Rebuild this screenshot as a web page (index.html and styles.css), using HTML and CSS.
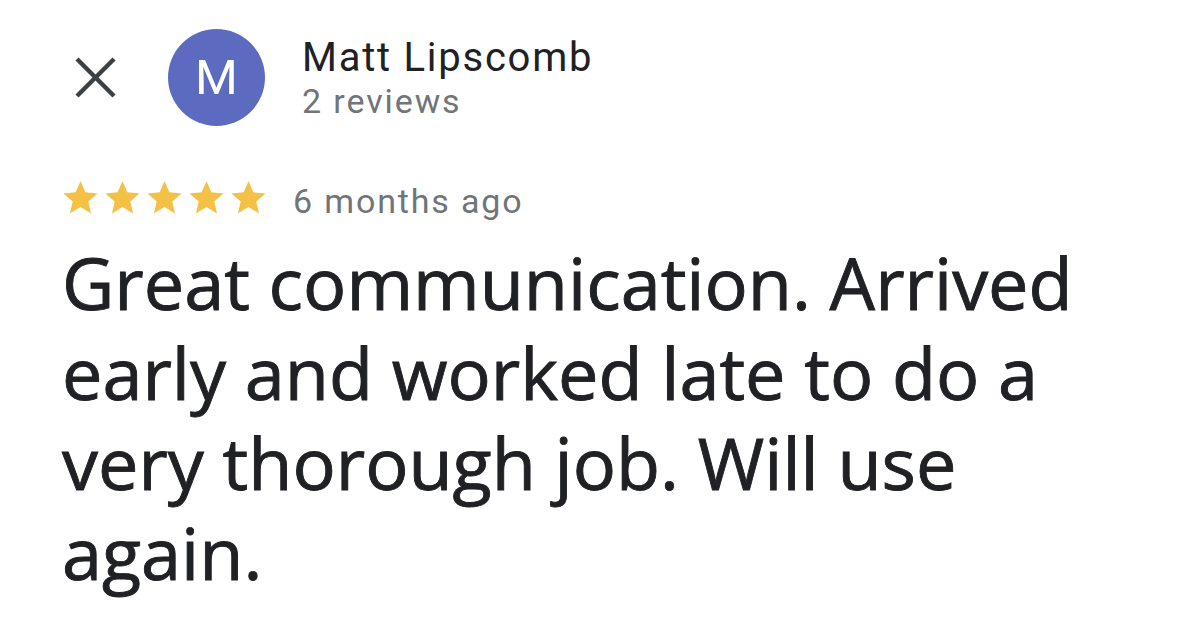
FILE: index.html
```html
<!DOCTYPE html>
<html lang="en">
<head>
<meta charset="utf-8">
<title>Review</title>
<link rel="stylesheet" href="styles.css">
</head>
<body>
<main class="review">
  <header class="review-header">
    <button class="close-btn" aria-label="Close">
      <svg class="close-icon" viewBox="0 0 41 41" width="41" height="41">
        <line x1="2" y1="2" x2="39" y2="39"/>
        <line x1="39" y1="2" x2="2" y2="39"/>
      </svg>
    </button>
    <div class="avatar">M</div>
    <div class="author">
      <div class="author-name">Matt Lipscomb</div>
      <div class="author-meta">2 reviews</div>
    </div>
  </header>
  <div class="rating-row">
    <div class="stars">
      <svg class="star" viewBox="2 2 20 19.3"><path d="M12 17.27L18.18 21l-1.64-7.03L22 9.24l-7.19-.61L12 2 9.19 8.63 2 9.24l5.46 4.73L5.82 21z"/></svg>
      <svg class="star" viewBox="2 2 20 19.3"><path d="M12 17.27L18.18 21l-1.64-7.03L22 9.24l-7.19-.61L12 2 9.19 8.63 2 9.24l5.46 4.73L5.82 21z"/></svg>
      <svg class="star" viewBox="2 2 20 19.3"><path d="M12 17.27L18.18 21l-1.64-7.03L22 9.24l-7.19-.61L12 2 9.19 8.63 2 9.24l5.46 4.73L5.82 21z"/></svg>
      <svg class="star" viewBox="2 2 20 19.3"><path d="M12 17.27L18.18 21l-1.64-7.03L22 9.24l-7.19-.61L12 2 9.19 8.63 2 9.24l5.46 4.73L5.82 21z"/></svg>
      <svg class="star" viewBox="2 2 20 19.3"><path d="M12 17.27L18.18 21l-1.64-7.03L22 9.24l-7.19-.61L12 2 9.19 8.63 2 9.24l5.46 4.73L5.82 21z"/></svg>
    </div>
    <span class="rating-date">6 months ago</span>
  </div>
  <p class="review-text">Great communication. Arrived early and worked late to do a very thorough job. Will use again.</p>
</main>
</body>
</html>
```

FILE: styles.css
```css
html, body {
  margin: 0;
  padding: 0;
  background: #ffffff;
}

body {
  width: 1179px;
  height: 636px;
  overflow: hidden;
  font-family: Roboto, "Liberation Sans", sans-serif;
  color: #202124;
}

.review {
  padding: 29px 62px 0 62px;
}

.review-header {
  display: flex;
  align-items: center;
}

.close-btn {
  border: 0;
  background: none;
  padding: 0;
  margin-left: 13px;
  width: 41px;
  height: 41px;
  display: flex;
}

.close-icon line {
  stroke: #3c4043;
  stroke-width: 4.5;
}

.avatar {
  margin-left: 52px;
  width: 97px;
  height: 97px;
  border-radius: 50%;
  background: #5c6bc0;
  color: #ffffff;
  font-size: 49px;
  line-height: 97px;
  text-align: center;
}

.author {
  margin-left: 37px;
  display: flex;
  flex-direction: column;
}

.author-name {
  font-size: 40px;
  line-height: 44px;
  letter-spacing: 1.75px;
  color: #202124;
}

.author-meta {
  font-size: 34px;
  line-height: 36px;
  letter-spacing: 1.9px;
  color: #70757a;
  margin-top: 3px;
}

.rating-row {
  display: flex;
  align-items: flex-start;
  margin-top: 55px;
}

.stars {
  display: flex;
  gap: 7px;
  padding-left: 1px;
}

.star {
  width: 35px;
  height: 33px;
  fill: #f4c046;
}

.rating-date {
  margin-left: 27px;
  margin-top: 2px;
  font-size: 34px;
  line-height: 36px;
  letter-spacing: 1.85px;
  color: #70757a;
}

.review-text {
  margin: 18px 0 0 0;
  font-family: "Open Sans", sans-serif;
  font-size: 72px;
  line-height: 90px;
  color: #202124;
  -webkit-text-stroke: 0.9px #202124;
}
```
